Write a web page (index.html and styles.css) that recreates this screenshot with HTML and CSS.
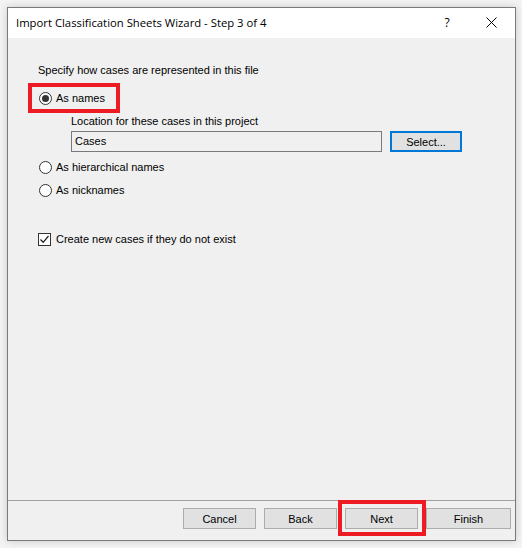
FILE: index.html
```html
<!DOCTYPE html>
<html>
<head>
<meta charset="utf-8">
<link rel="stylesheet" href="styles.css">
</head>
<body>
<div class="window">
  <div class="titlebar">
    <span class="title">Import Classification Sheets Wizard - Step 3 of 4</span>
    <span class="help">?</span>
    <span class="close"><svg width="11" height="11" viewBox="0 0 11 11"><path d="M0.5 0.5 L10.5 10.5 M10.5 0.5 L0.5 10.5" stroke="#000" stroke-width="1" fill="none"/></svg></span>
  </div>
  <div class="content">
    <div class="heading">Specify how cases are represented in this file</div>
    <div class="opt first marked"><span class="radio checked"></span><span>As names</span></div>
    <div class="loc-label">Location for these cases in this project</div>
    <div class="loc-row">
      <div class="textbox">Cases</div>
      <div class="btn select">Select...</div>
    </div>
    <div class="opt second"><span class="radio"></span><span>As hierarchical names</span></div>
    <div class="opt third"><span class="radio"></span><span>As nicknames</span></div>
    <div class="opt check"><span class="checkbox"><svg width="11" height="11" viewBox="0 0 11 11"><path d="M1.5 5.5 L4.2 8.3 L9.5 2" stroke="#222" stroke-width="1.3" fill="none"/></svg></span><span>Create new cases if they do not exist</span></div>
  </div>
  <div class="footer">
    <div class="btn">Cancel</div>
    <div class="btn">Back</div>
    <div class="btn marked-btn">Next</div>
    <div class="btn finish">Finish</div>
  </div>
</div>
</body>
</html>
```
FILE: styles.css
```css
html, body {
  margin: 0;
  padding: 0;
}
body {
  background: #f4f4f4;
  width: 522px;
  height: 548px;
  overflow: hidden;
}
.window {
  margin: 7px 0 0 7px;
  width: 507px;
  height: 532px;
  border: 1px solid #7a7a7a;
  background: #f0f0f0;
  box-shadow: 0 0 8px rgba(0,0,0,0.18);
  display: flex;
  flex-direction: column;
  font-family: "Liberation Sans", Arial, sans-serif;
  font-size: 11px;
  color: #000;
}
.titlebar {
  height: 30px;
  background: #fff;
  display: flex;
  align-items: center;
  position: relative;
}
.title {
  font-family: "Open Sans", "Noto Sans", sans-serif;
  font-size: 11.3px;
  margin-left: 8px;
  margin-top: -1px;
  flex: 1;
}
.help {
  font-family: "Open Sans", sans-serif;
  font-size: 12px;
  width: 44px;
  text-align: center;
  margin-top: -2px;
}
.close {
  width: 44px;
  display: flex;
  justify-content: center;
  margin-right: 2px;
  margin-top: -2px;
}
.content {
  flex: 1;
  padding: 26px 0 0 30px;
  border-bottom: 1px solid #a0a0a0;
}
.heading {
  line-height: 13px;
}
.opt {
  display: flex;
  align-items: center;
  height: 13px;
  line-height: 13px;
  gap: 4px;
  width: max-content;
  position: relative;
  margin-left: 1px;
}
.opt.first { margin-top: 15px; }
.opt.second { margin-top: 9px; }
.opt.third { margin-top: 10px; }
.opt.check { margin-top: 36px; margin-left: 0; gap: 5px; }
.radio {
  width: 11px;
  height: 11px;
  border: 1px solid #333;
  border-radius: 50%;
  background: #fff;
  display: inline-flex;
  align-items: center;
  justify-content: center;
}
.radio.checked::after {
  content: "";
  width: 7px;
  height: 7px;
  border-radius: 50%;
  background: #333;
}
.checkbox {
  width: 11px;
  height: 11px;
  border: 1px solid #333;
  background: #fff;
  display: inline-flex;
}
.marked::after {
  content: "";
  position: absolute;
  left: -11px;
  top: -9px;
  width: 84px;
  height: 22px;
  border: 4px solid #ed1c24;
}
.loc-label {
  margin: 10px 0 0 33px;
  line-height: 13px;
}
.loc-row {
  margin: 3px 0 0 33px;
  display: flex;
  gap: 8px;
}
.textbox {
  width: 304px;
  height: 19px;
  border: 1px solid #7a7a7a;
  background: #f0f0f0;
  line-height: 19px;
  padding-left: 3px;
  padding-right: 2px;
}
.btn {
  height: 19px;
  width: 71px;
  border: 1px solid #adadad;
  background: #e1e1e1;
  display: flex;
  align-items: center;
  justify-content: center;
  position: relative;
}
.btn.select {
  width: 68px;
  height: 17px;
  border: 2px solid #0078d7;
}
.footer {
  height: 39px;
  display: flex;
  justify-content: flex-end;
  align-items: flex-start;
  padding: 7px 4px 0 0;
  box-sizing: border-box;
  gap: 8px;
}
.footer .btn { width: 71px; }
.footer .btn.finish { width: 83px; }
.marked-btn::after {
  content: "";
  position: absolute;
  left: -8px;
  top: -9px;
  width: 80px;
  height: 28px;
  border: 4px solid #ed1c24;
}
```
